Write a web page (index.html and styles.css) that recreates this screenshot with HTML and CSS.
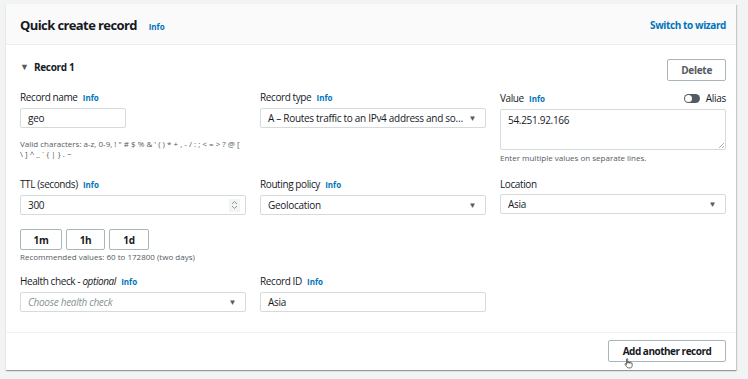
FILE: index.html
```html
<!DOCTYPE html>
<html lang="en">
<head>
  <meta charset="UTF-8">
  <title>Quick create record</title>
  <link rel="stylesheet" href="styles.css">
</head>
<body>
  <div class="card">
    <div class="card-header">
      <h2>Quick create record <a class="info">Info</a></h2>
      <a class="wizard">Switch to wizard</a>
    </div>

    <div class="card-body">
      <div class="record-head">
        <span class="record-title"><span class="caret">&#9660;</span> Record 1</span>
        <button class="btn">Delete</button>
      </div>

      <div class="fields">
        <div class="field">
          <label>Record name <a class="info">Info</a></label>
          <div class="input short"><span>geo</span></div>
          <p class="hint name-hint">Valid characters: a-z, 0-9, ! " # $ % &amp; ' ( ) * + , - / : ; &lt; = &gt; ? @ [<br>\ ] ^ _ ` { | } . ~</p>
        </div>
        <div class="field">
          <label>Record type <a class="info">Info</a></label>
          <div class="input select"><span class="val">A – Routes traffic to an IPv4 address and so…</span><span class="arrow">&#9660;</span></div>
        </div>
        <div class="field">
          <div class="label-row">
            <label>Value <a class="info">Info</a></label>
            <span class="alias"><span class="toggle"></span>Alias</span>
          </div>
          <div class="input textarea"><span>54.251.92.166</span><span class="grip"></span></div>
          <p class="hint value-hint">Enter multiple values on separate lines.</p>
        </div>

        <div class="field">
          <label>TTL (seconds) <a class="info">Info</a></label>
          <div class="input number"><span>300</span><span class="spin">
            <svg width="7" height="10" viewBox="0 0 7 10"><path d="M1 4 L3.5 1.5 L6 4 M1 6 L3.5 8.5 L6 6" fill="none" stroke="#879596" stroke-width="1"/></svg>
          </span></div>
          <div class="quick">
            <button class="btn small">1m</button>
            <button class="btn small">1h</button>
            <button class="btn small">1d</button>
          </div>
          <p class="hint ttl-hint">Recommended values: 60 to 172800 (two days)</p>
        </div>
        <div class="field">
          <label>Routing policy <a class="info">Info</a></label>
          <div class="input select"><span class="val">Geolocation</span><span class="arrow">&#9660;</span></div>
        </div>
        <div class="field">
          <label>Location</label>
          <div class="input select"><span class="val">Asia</span><span class="arrow">&#9660;</span></div>
        </div>

        <div class="field">
          <label>Health check - <i>optional</i> <a class="info">Info</a></label>
          <div class="input select"><span class="val placeholder">Choose health check</span><span class="arrow">&#9660;</span></div>
        </div>
        <div class="field">
          <label>Record ID <a class="info">Info</a></label>
          <div class="input"><span>Asia</span></div>
        </div>
      </div>
    </div>

    <div class="card-footer">
      <button class="btn wide">Add another record</button>
      <svg class="cursor" width="10" height="11" viewBox="0 0 12 13"><path d="M3 1.2 C3 0.5 4.4 0.5 4.4 1.2 L4.4 6 L5 6 L5 4.8 C5 4.2 6.3 4.2 6.3 4.8 L6.3 6 L6.8 6 L6.8 5.2 C6.8 4.6 8.1 4.6 8.1 5.2 L8.1 6.2 L8.6 6.2 C8.6 5.6 9.8 5.6 9.8 6.2 L9.8 9 C9.8 10.5 9 11.8 7.5 11.8 L5.3 11.8 C4.3 11.8 3.6 11 3 10.2 L1.2 7.6 C0.8 7 1.6 6.3 2.2 6.9 L3 7.8 Z" fill="#fff" stroke="#222" stroke-width="0.8"/></svg>
    </div>
  </div>
</body>
</html>
```

FILE: styles.css
```css
body {
  margin: 0;
  padding: 4px 12px 8px 6px;
  background-color: #f2f3f3;
  font-family: "Open Sans", Arial, sans-serif;
  color: #16191f;
  font-size: 10px;
}

.card {
  background-color: #ffffff;
  box-shadow: 0 1px 1px 0 rgba(0, 28, 36, 0.3), 1px 1px 1px 0 rgba(0, 28, 36, 0.15);
}

.card-header {
  display: flex;
  justify-content: space-between;
  align-items: center;
  padding: 2px 10px 0 14px;
  box-sizing: border-box;
  height: 41px;
  background-color: #fafafa;
  border-bottom: 1px solid #eaeded;
}

.card-header h2 {
  margin: 0;
  font-size: 13px;
  font-weight: bold;
  letter-spacing: -0.6px;
}

.card-header h2 .info {
  margin-left: 9px;
  letter-spacing: 0;
}

.info {
  color: #0073bb;
  font-size: 8px;
  font-weight: bold;
  margin-left: 3px;
  letter-spacing: 0;
}

.wizard {
  color: #0073bb;
  font-weight: bold;
  font-size: 10px;
  letter-spacing: -0.4px;
}

.card-body {
  padding: 14px 10px 20px 14px;
  border-bottom: 1px solid #f2f3f3;
}

.record-head {
  display: flex;
  justify-content: space-between;
  align-items: center;
  margin-bottom: 9px;
}

.record-title {
  font-weight: bold;
  font-size: 10px;
  letter-spacing: -0.3px;
  position: relative;
  top: -3px;
}

.caret {
  font-size: 9px;
  margin-right: 3px;
  color: #545b64;
  position: relative;
  top: -1px;
}

.btn {
  font-family: inherit;
  font-size: 10px;
  font-weight: bold;
  color: #545b64;
  background-color: #ffffff;
  border: 1px solid #aab7b8;
  border-radius: 2px;
  height: 22px;
  padding: 0 13px;
  letter-spacing: -0.3px;
}

.btn.small {
  height: 21px;
  width: 42px;
  padding: 0;
  color: #16191f;
}

.btn.wide {
  width: 118px;
  padding: 0;
  color: #16191f;
  letter-spacing: -0.5px;
}

.fields {
  display: grid;
  grid-template-columns: repeat(3, 226px);
  column-gap: 14px;
  row-gap: 14px;
  align-items: start;
}

.field label {
  display: block;
  line-height: 14px;
  margin-bottom: 3px;
  color: #16191f;
  letter-spacing: -0.4px;
}

.label-row {
  display: flex;
  justify-content: space-between;
  align-items: center;
  margin-bottom: 2px;
}

.label-row label {
  margin-bottom: 0;
}

.alias {
  display: flex;
  align-items: center;
  line-height: 17px;
  letter-spacing: -0.3px;
}

.toggle {
  width: 16px;
  height: 9px;
  border-radius: 5px;
  background-color: #545b64;
  margin-right: 6px;
  position: relative;
}

.toggle::after {
  content: "";
  position: absolute;
  left: 1px;
  top: 1px;
  width: 7px;
  height: 7px;
  border-radius: 50%;
  background-color: #ffffff;
}

.input {
  box-sizing: border-box;
  height: 20px;
  line-height: 18px;
  border: 1px solid #d5dbdb;
  border-radius: 2px;
  padding: 0 7px;
  font-size: 10px;
  color: #16191f;
  position: relative;
  white-space: nowrap;
  letter-spacing: -0.3px;
}

.input.short {
  width: 106px;
}

.select {
  display: flex;
  justify-content: space-between;
}

.placeholder {
  color: #879596;
  font-style: italic;
}

.arrow {
  font-size: 8px;
  color: #545b64;
  padding-right: 2px;
}

.textarea {
  height: 41px;
  padding-top: 1px;
}

.grip {
  position: absolute;
  right: 1px;
  bottom: 1px;
  width: 5px;
  height: 5px;
  background: linear-gradient(135deg, transparent 50%, #aab7b8 50%, #aab7b8 60%, transparent 60%, transparent 75%, #aab7b8 75%, #aab7b8 85%, transparent 85%);
}

.number {
  display: flex;
  justify-content: space-between;
  align-items: center;
  padding-right: 5px;
}

.spin {
  display: flex;
  align-items: center;
  justify-content: center;
  width: 11px;
  height: 13px;
  background-color: #f2f3f3;
}

.quick {
  display: flex;
  gap: 4px;
  margin-top: 14px;
}

.quick .btn:nth-child(2) {
  width: 39px;
}

.quick .btn:nth-child(3) {
  width: 40px;
}

.hint {
  margin: 3px 0 0;
  font-size: 8px;
  line-height: 10px;
  color: #545b64;
}

.name-hint {
  margin-top: 11px;
}

.ttl-hint {
  margin-top: 2px;
  margin-bottom: -2px;
}

.card-footer {
  display: flex;
  justify-content: flex-end;
  padding: 7px 10px 8px 14px;
  position: relative;
}

.cursor {
  position: absolute;
  left: 618px;
  top: 25px;
}
```
